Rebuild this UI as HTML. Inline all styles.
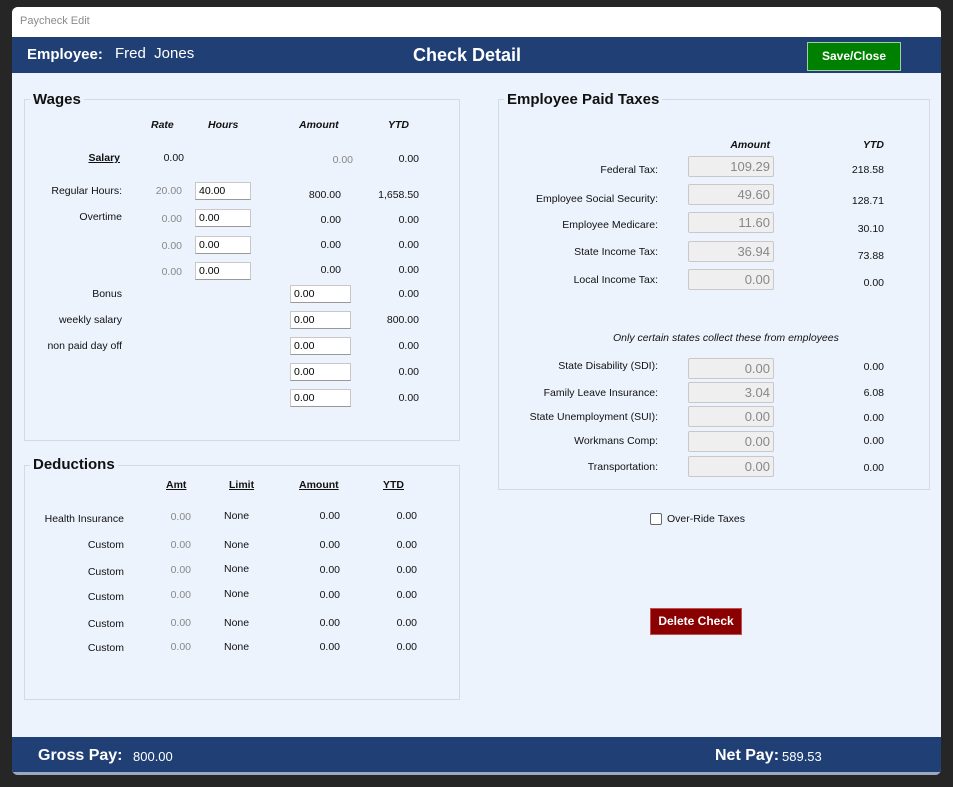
<!DOCTYPE html>
<html><head><meta charset="utf-8"><style>
*{margin:0;padding:0;box-sizing:border-box}
body{width:953px;height:787px;background:#262626;position:relative;font-family:"Liberation Sans",Arial,sans-serif;overflow:hidden}
.win{position:absolute;left:12px;top:7px;width:929px;height:768px;background:#edf3fd;border-radius:6px;overflow:hidden}
.tb{position:absolute;left:0;top:0;width:929px;height:30px;background:#fff;color:#8a8a8a;font-size:11px;padding:8px 8px}
.hd{position:absolute;left:0;top:30px;width:929px;height:36px;background:#1f3f75}
.ft{position:absolute;left:0;top:730px;width:929px;height:38px;background:#1f3f75;border-bottom:3px solid #9aa8c0}
.a{position:absolute;font-size:10.5px;line-height:14px;color:#111;white-space:nowrap}
.g{color:#888}
.b{font-weight:bold}
.i{font-style:italic;font-weight:bold}
.u{text-decoration:underline;font-weight:bold}
.fs{position:absolute;border:1px solid #d4dae3}
.lg{position:absolute;font-size:15px;font-weight:bold;color:#111;background:#edf3fd;padding:0 3px}
.in{position:absolute;background:#fff;border:1px solid #c8c8c8;border-bottom:1px solid #999;font-size:10.5px;padding:2px 3px;height:18px;width:56px}
.tx{position:absolute;background:#efefef;border:1px solid #c8c8c8;border-radius:2px;font-size:13px;color:#888;text-align:right;padding:2px 3px;height:21px;width:86px;line-height:15px}
</style></head><body>
<div class="win">
<div class="tb">Paycheck Edit</div>
<div class="hd">
<div class="a b" style="left:15px;top:9px;font-size:15px;line-height:18px;color:#fff">Employee:</div>
<div class="a" style="left:103px;top:8px;font-size:15px;line-height:18px;color:#fff">Fred&nbsp; Jones</div>
<div class="a b" style="left:401px;top:8px;font-size:18px;line-height:20px;color:#fff">Check Detail</div>
<div style="position:absolute;left:795px;top:5px;width:94px;height:29px;background:#008000;border:1px solid #9fd09f;color:#fff;font-size:12px;font-weight:bold;text-align:center;line-height:27px">Save/Close</div>
</div>
<div class="ft">
<div class="a b" style="left:26px;top:10px;font-size:16px;line-height:18px;color:#fff">Gross Pay:</div>
<div class="a" style="left:121px;top:12px;font-size:13px;line-height:16px;color:#fff">800.00</div>
<div class="a b" style="left:703px;top:10px;font-size:16px;line-height:18px;color:#fff">Net Pay:</div>
<div class="a" style="left:770px;top:12px;font-size:13px;line-height:16px;color:#fff">589.53</div>
</div>
</div>

<!-- Wages -->
<div class="fs" style="left:24px;top:99px;width:436px;height:342px"></div>
<div class="lg" style="left:30px;top:91px">Wages</div>
<div class="a i" style="left:151px;top:118px">Rate</div>
<div class="a i" style="left:208px;top:118px">Hours</div>
<div class="a i" style="left:299px;top:118px">Amount</div>
<div class="a i" style="left:388px;top:118px">YTD</div>

<div class="a u" style="right:833px;top:151px">Salary</div>
<div class="a" style="right:769px;top:151px">0.00</div>
<div class="a g" style="right:600px;top:153px">0.00</div>
<div class="a" style="right:534px;top:152px">0.00</div>

<div class="a" style="right:831px;top:184px">Regular Hours:</div>
<div class="a g" style="right:771px;top:184px">20.00</div>
<div class="in" style="left:195px;top:182px">40.00</div>
<div class="a" style="right:612px;top:188px">800.00</div>
<div class="a" style="right:534px;top:188px">1,658.50</div>

<div class="a" style="right:831px;top:210px">Overtime</div>
<div class="a g" style="right:771px;top:212px">0.00</div>
<div class="in" style="left:195px;top:209px">0.00</div>
<div class="a" style="right:612px;top:213px">0.00</div>
<div class="a" style="right:534px;top:213px">0.00</div>

<div class="a g" style="right:771px;top:239px">0.00</div>
<div class="in" style="left:195px;top:236px">0.00</div>
<div class="a" style="right:612px;top:238px">0.00</div>
<div class="a" style="right:534px;top:238px">0.00</div>

<div class="a g" style="right:771px;top:265px">0.00</div>
<div class="in" style="left:195px;top:262px">0.00</div>
<div class="a" style="right:612px;top:263px">0.00</div>
<div class="a" style="right:534px;top:263px">0.00</div>

<div class="a" style="right:831px;top:287px">Bonus</div>
<div class="in" style="left:290px;top:285px;width:61px">0.00</div>
<div class="a" style="right:534px;top:287px">0.00</div>
<div class="a" style="right:831px;top:313px">weekly salary</div>
<div class="in" style="left:290px;top:311px;width:61px">0.00</div>
<div class="a" style="right:534px;top:313px">800.00</div>
<div class="a" style="right:831px;top:339px">non paid day off</div>
<div class="in" style="left:290px;top:337px;width:61px">0.00</div>
<div class="a" style="right:534px;top:339px">0.00</div>
<div class="in" style="left:290px;top:363px;width:61px">0.00</div>
<div class="a" style="right:534px;top:365px">0.00</div>
<div class="in" style="left:290px;top:389px;width:61px">0.00</div>
<div class="a" style="right:534px;top:391px">0.00</div>

<!-- Deductions -->
<div class="fs" style="left:24px;top:465px;width:436px;height:235px"></div>
<div class="lg" style="left:30px;top:456px">Deductions</div>
<div class="a u" style="left:166px;top:478px">Amt</div>
<div class="a u" style="left:229px;top:478px">Limit</div>
<div class="a u" style="left:299px;top:478px">Amount</div>
<div class="a u" style="left:383px;top:478px">YTD</div>

<div class="a" style="right:829px;top:512px">Health Insurance</div>
<div class="a g" style="right:762px;top:510px">0.00</div>
<div class="a" style="left:224px;top:509px">None</div>
<div class="a" style="right:613px;top:509px">0.00</div>
<div class="a" style="right:536px;top:509px">0.00</div>

<div class="a" style="right:829px;top:538px">Custom</div>
<div class="a g" style="right:762px;top:538px">0.00</div>
<div class="a" style="left:224px;top:538px">None</div>
<div class="a" style="right:613px;top:538px">0.00</div>
<div class="a" style="right:536px;top:538px">0.00</div>

<div class="a" style="right:829px;top:565px">Custom</div>
<div class="a g" style="right:762px;top:563px">0.00</div>
<div class="a" style="left:224px;top:562px">None</div>
<div class="a" style="right:613px;top:563px">0.00</div>
<div class="a" style="right:536px;top:563px">0.00</div>

<div class="a" style="right:829px;top:590px">Custom</div>
<div class="a g" style="right:762px;top:588px">0.00</div>
<div class="a" style="left:224px;top:587px">None</div>
<div class="a" style="right:613px;top:588px">0.00</div>
<div class="a" style="right:536px;top:588px">0.00</div>

<div class="a" style="right:829px;top:617px">Custom</div>
<div class="a g" style="right:762px;top:616px">0.00</div>
<div class="a" style="left:224px;top:616px">None</div>
<div class="a" style="right:613px;top:616px">0.00</div>
<div class="a" style="right:536px;top:616px">0.00</div>

<div class="a" style="right:829px;top:641px">Custom</div>
<div class="a g" style="right:762px;top:640px">0.00</div>
<div class="a" style="left:224px;top:640px">None</div>
<div class="a" style="right:613px;top:640px">0.00</div>
<div class="a" style="right:536px;top:640px">0.00</div>

<!-- Taxes -->
<div class="fs" style="left:498px;top:99px;width:432px;height:391px"></div>
<div class="lg" style="left:504px;top:91px">Employee Paid Taxes</div>
<div class="a i" style="right:183px;top:138px">Amount</div>
<div class="a i" style="right:69px;top:138px">YTD</div>

<div class="a" style="right:295px;top:163px">Federal Tax:</div>
<div class="tx" style="left:688px;top:156px">109.29</div>
<div class="a" style="right:69px;top:163px">218.58</div>
<div class="a" style="right:295px;top:192px">Employee Social Security:</div>
<div class="tx" style="left:688px;top:184px">49.60</div>
<div class="a" style="right:69px;top:194px">128.71</div>
<div class="a" style="right:295px;top:218px">Employee Medicare:</div>
<div class="tx" style="left:688px;top:212px">11.60</div>
<div class="a" style="right:69px;top:222px">30.10</div>
<div class="a" style="right:295px;top:245px">State Income Tax:</div>
<div class="tx" style="left:688px;top:241px">36.94</div>
<div class="a" style="right:69px;top:249px">73.88</div>
<div class="a" style="right:295px;top:273px">Local Income Tax:</div>
<div class="tx" style="left:688px;top:269px">0.00</div>
<div class="a" style="right:69px;top:276px">0.00</div>

<div class="a" style="left:613px;top:331px;font-style:italic">Only certain states collect these from employees</div>

<div class="a" style="right:295px;top:359px">State Disability (SDI):</div>
<div class="tx" style="left:688px;top:358px">0.00</div>
<div class="a" style="right:69px;top:360px">0.00</div>
<div class="a" style="right:295px;top:386px">Family Leave Insurance:</div>
<div class="tx" style="left:688px;top:382px">3.04</div>
<div class="a" style="right:69px;top:386px">6.08</div>
<div class="a" style="right:295px;top:410px">State Unemployment (SUI):</div>
<div class="tx" style="left:688px;top:406px">0.00</div>
<div class="a" style="right:69px;top:411px">0.00</div>
<div class="a" style="right:295px;top:434px">Workmans Comp:</div>
<div class="tx" style="left:688px;top:431px">0.00</div>
<div class="a" style="right:69px;top:434px">0.00</div>
<div class="a" style="right:295px;top:460px">Transportation:</div>
<div class="tx" style="left:688px;top:456px">0.00</div>
<div class="a" style="right:69px;top:461px">0.00</div>

<div style="position:absolute;left:650px;top:513px;width:12px;height:12px;border:1px solid #666;border-radius:2px;background:#fff"></div>
<div class="a" style="left:667px;top:512px">Over-Ride Taxes</div>

<div style="position:absolute;left:650px;top:608px;width:92px;height:27px;background:#8b0000;border:1px solid #c05050;color:#fff;font-size:12px;font-weight:bold;text-align:center;line-height:25px">Delete Check</div>
</body></html>
